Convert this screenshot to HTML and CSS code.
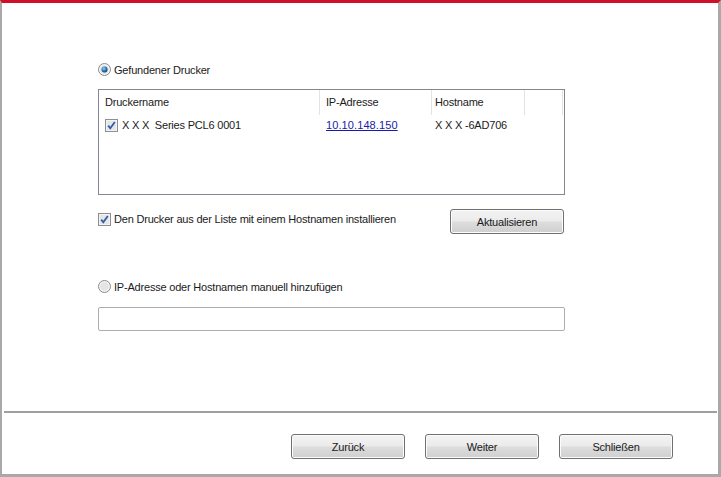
FILE: index.html
```html
<!DOCTYPE html>
<html>
<head>
<meta charset="utf-8">
<link rel="stylesheet" href="styles.css">
</head>
<body>
<div class="window">
  <div class="content">
    <label class="option">
      <svg class="radio" width="13" height="13" viewBox="0 0 13 13">
        <defs>
          <radialGradient id="rg1" cx="0.4" cy="0.35" r="0.7">
            <stop offset="0" stop-color="#9fd3f5"/>
            <stop offset="0.6" stop-color="#1f6fb5"/>
            <stop offset="1" stop-color="#0b3d78"/>
          </radialGradient>
        </defs>
        <circle cx="6.5" cy="6.5" r="6" fill="#f4f4f4" stroke="#8b8b8b"/>
        <circle cx="6.5" cy="6.5" r="4.3" fill="#e2e2e2"/>
        <circle cx="6.5" cy="6.5" r="3" fill="url(#rg1)"/>
      </svg>
      <span>Gefundener Drucker</span>
    </label>

    <div class="listbox">
      <div class="list-head">
        <div class="col c1">Druckername</div>
        <div class="col c2">IP-Adresse</div>
        <div class="col c3">Hostname</div>
        <div class="col c4"></div>
      </div>
      <div class="list-row">
        <div class="col c1">
          <svg class="check" width="13" height="13" viewBox="0 0 13 13">
            <rect x="0.5" y="0.5" width="12" height="12" fill="#f3f3f3" stroke="#8e8f8f"/>
            <rect x="2" y="2" width="9" height="9" fill="#e6e6e6"/>
            <path d="M3.2 6.6 L5.3 9.2 L9.8 3" fill="none" stroke="#2f5fa8" stroke-width="1.8"/>
          </svg>
          <span class="xname">X X X&nbsp; Series PCL6 0001</span>
        </div>
        <div class="col c2"><a class="link">10.10.148.150</a></div>
        <div class="col c3">X X X -6AD706</div>
      </div>
    </div>

    <div class="check-line">
      <label class="option">
        <svg class="check" width="13" height="13" viewBox="0 0 13 13">
          <rect x="0.5" y="0.5" width="12" height="12" fill="#f3f3f3" stroke="#8e8f8f"/>
          <rect x="2" y="2" width="9" height="9" fill="#e6e6e6"/>
          <path d="M3.2 6.6 L5.3 9.2 L9.8 3" fill="none" stroke="#2f5fa8" stroke-width="1.8"/>
        </svg>
        <span>Den Drucker aus der Liste mit einem Hostnamen installieren</span>
      </label>
      <button class="btn refresh">Aktualisieren</button>
    </div>

    <label class="option manual">
      <svg class="radio" width="13" height="13" viewBox="0 0 13 13">
        <circle cx="6.5" cy="6.5" r="6" fill="#f4f4f4" stroke="#8b8b8b"/>
        <circle cx="6.5" cy="6.5" r="4.3" fill="#e4e4e4"/>
      </svg>
      <span>IP-Adresse oder Hostnamen manuell hinzufügen</span>
    </label>

    <div class="textbox"></div>
  </div>

  <div class="separator"></div>

  <div class="footer">
    <button class="btn">Zurück</button>
    <button class="btn">Weiter</button>
    <button class="btn">Schließen</button>
  </div>
</div>
</body>
</html>
```

FILE: styles.css
```css
html, body {
  margin: 0;
  padding: 0;
  background: #ffffff;
}

.window {
  width: 721px;
  height: 477px;
  box-sizing: border-box;
  border-top: 3px solid #d0102a;
  border-left: 2px solid #a9a9a9;
  border-right: 3px solid #a9a9a9;
  border-bottom: 3px solid #a9a9a9;
  background: #fff;
  font-family: "Liberation Sans", Arial, sans-serif;
  font-size: 11px;
  letter-spacing: -0.2px;
  color: #1a1a1a;
  display: flex;
  flex-direction: column;
}

.content {
  padding: 60px 0 0 96px;
  height: 344px;
  box-sizing: border-box;
  display: flex;
  flex-direction: column;
}

.option {
  display: flex;
  align-items: center;
  gap: 3px;
  height: 13px;
  white-space: nowrap;
}

.radio, .check {
  flex: none;
  display: block;
}

.listbox {
  margin-top: 13px;
  width: 467px;
  height: 106px;
  box-sizing: border-box;
  border: 1px solid #828790;
  display: flex;
  flex-direction: column;
}

.list-head, .list-row {
  display: flex;
}

.list-head {
  height: 25px;
  align-items: center;
}

.list-head .col {
  height: 25px;
  line-height: 25px;
  border-right: 1px solid #e3e3e3;
  box-sizing: border-box;
}

.c1 { width: 221px; padding-left: 6px; box-sizing: border-box; }
.c2 { width: 112px; padding-left: 6px; box-sizing: border-box; }
.c3 { width: 93px; padding-left: 3px; box-sizing: border-box; }
.c4 { width: 38px; }

.list-row {
  height: 20px;
  align-items: center;
}

.list-row .c1 {
  display: flex;
  align-items: center;
  gap: 4px;
}

.link {
  color: #1a1aa8;
  text-decoration: underline;
  letter-spacing: 0.1px;
}

.check-line {
  margin-top: 14px;
  width: 467px;
  display: flex;
  align-items: center;
  justify-content: space-between;
}

.check-line .option {
  margin-top: -5px;
}

.btn {
  width: 114px;
  height: 25px;
  box-sizing: border-box;
  border: 1px solid #707070;
  border-radius: 3px;
  background: linear-gradient(#f3f3f3 0%, #ebebeb 48%, #dddddd 52%, #cfcfcf 100%);
  font-family: "Liberation Sans", Arial, sans-serif;
  font-size: 11px;
  letter-spacing: -0.2px;
  color: #1a1a1a;
  padding: 0;
  box-shadow: inset 0 0 0 1px #fcfcfc;
}

.refresh {
  margin-right: 1px;
}

.manual {
  margin-top: 46px;
}

.textbox {
  margin-top: 14px;
  width: 467px;
  height: 24px;
  box-sizing: border-box;
  border: 1px solid #abadb3;
  border-radius: 2px;
}

.separator {
  margin: 64px 1px 0 2px;
  height: 2px;
  background: #a0a0a0;
}

.footer {
  display: flex;
  padding: 21px 0 0 289px;
  gap: 20px;
}
```
